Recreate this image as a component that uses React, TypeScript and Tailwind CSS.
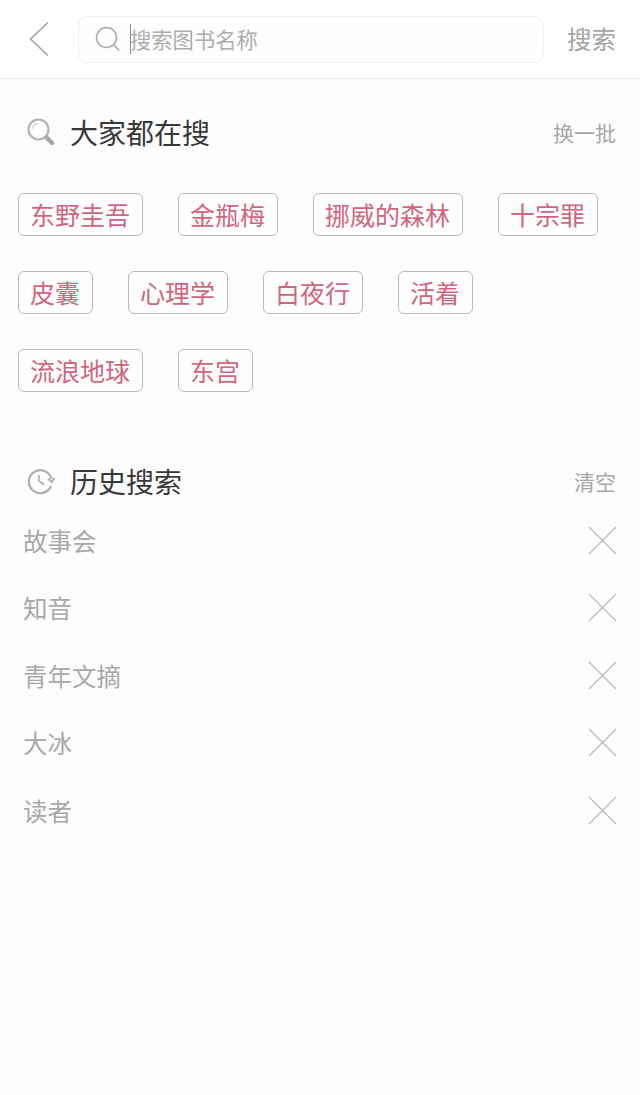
import React from "react";

const rows = ["故事会", "知音", "青年文摘", "大冰", "读者"];
const tags = ["东野圭吾", "金瓶梅", "挪威的森林", "十宗罪", "皮囊", "心理学", "白夜行", "活着", "流浪地球", "东宫"];

export default function App() {
  return (
    <div className="h-[1095px] w-[640px] overflow-hidden bg-[#fefdfe] font-['Noto_Sans_CJK_SC','Liberation_Sans',sans-serif]">
      <header className="flex h-[79px] items-center border-b border-[#eeeced] bg-white">
        <svg className="ml-[28px] h-[36px] w-[22px]" viewBox="0 0 22 36" fill="none" stroke="#a3a3a3" strokeWidth="1.6">
          <path d="M20 1.5 L2.5 18 L20 34.5" />
        </svg>
        <div className="ml-[28px] flex h-[47px] w-[466px] items-center rounded-[9px] border border-[#f0eeef] bg-[#fffeff] pl-[16px]">
          <svg className="h-[26px] w-[26px]" viewBox="0 0 26 26" fill="none" stroke="#a8a8a8" strokeWidth="1.5">
            <circle cx="11.5" cy="11.5" r="10" />
            <path d="M19 19 L24 24.5" />
          </svg>
          <span className="ml-[9px] h-[30px] w-px bg-[#8f8f8f]" />
          <span className="-ml-px text-[21.3px] leading-none text-[#adadad]">搜索图书名称</span>
        </div>
        <span className="ml-[23px] text-[24.5px] leading-none text-[#a3a3a3]">搜索</span>
      </header>

      <section className="mt-[29px] flex h-[48px] items-center pr-[24px] pl-[27px]">
        <svg className="h-[28px] w-[28px]" viewBox="0 0 28 28" fill="none">
          <circle cx="11.5" cy="11.5" r="10" stroke="#b3b3b3" strokeWidth="2.2" />
          <path d="M5.5 11 A6 6 0 0 1 11 5.5" stroke="#d6d6d6" strokeWidth="1.4" />
          <path d="M19.5 19.5 L25 25" stroke="#a6a6a6" strokeWidth="4.4" strokeLinecap="round" />
        </svg>
        <h2 className="ml-[15px] text-[28px] leading-none font-normal text-[#383838]">大家都在搜</h2>
        <span className="ml-auto text-[21px] leading-none text-[#a8a8a8]">换一批</span>
      </section>

      <div className="mt-[37px] flex flex-wrap gap-x-[35px] gap-y-[35px] pr-[20px] pl-[17.5px]">
        {tags.map((t) => (
          <span
            key={t}
            className="flex h-[43px] items-center rounded-[6px] border border-[#bdb7bb] bg-[#fffeff] px-[11.5px] pb-px text-[25px] leading-none text-[#d0667d]"
          >
            {t}
          </span>
        ))}
      </div>

      <section className="mt-[65px] flex h-[48px] items-center pr-[24px] pl-[27px]">
        <svg className="h-[28px] w-[28px]" viewBox="0 0 28 28" fill="none" stroke="#b0b0b0" strokeWidth="2.2">
          <path d="M24.5 12 A11.5 11.5 0 1 0 24 19" />
          <path d="M21 11.5 L24.7 15 L27.5 11" strokeWidth="2" />
          <path d="M12 8 L12 14 L17 17.5" strokeWidth="1.6" />
        </svg>
        <h2 className="ml-[15px] text-[28px] leading-none font-normal text-[#383838]">历史搜索</h2>
        <span className="ml-auto text-[21px] leading-none text-[#a8a8a8]">清空</span>
      </section>

      <ul className="mt-[2px] pr-[23px] pl-[24px]">
        {rows.map((r) => (
          <li key={r} className="flex h-[67.5px] items-center justify-between">
            <span className="-ml-px text-[24.5px] leading-none text-[#a8a8a8]">{r}</span>
            <svg className="-mt-px h-[29px] w-[29px]" viewBox="0 0 30 30" fill="none" stroke="#bababa" strokeWidth="1.3">
              <path d="M1 1 L29 29 M29 1 L1 29" />
            </svg>
          </li>
        ))}
      </ul>
    </div>
  );
}
